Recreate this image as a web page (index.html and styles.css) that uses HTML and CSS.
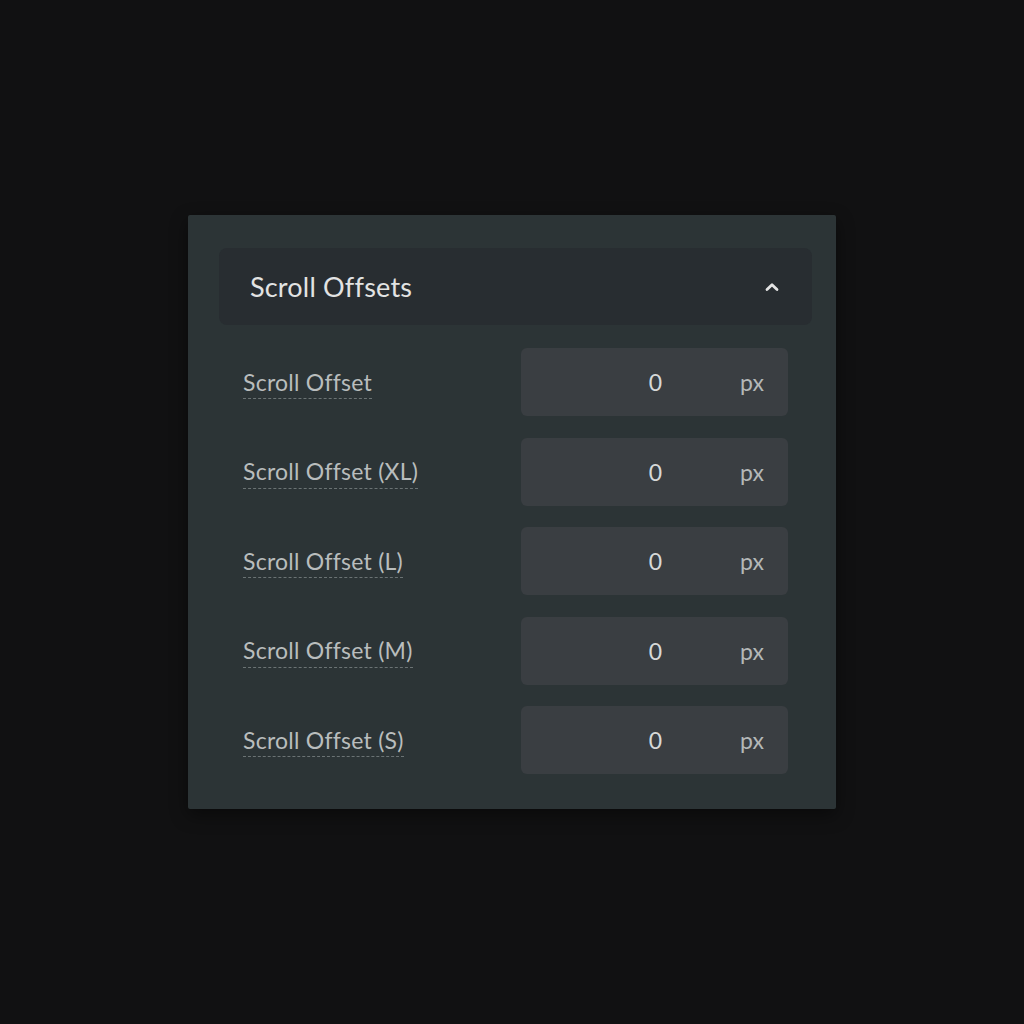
FILE: index.html
```html
<!DOCTYPE html>
<html>
<head>
<meta charset="utf-8">
<link rel="stylesheet" href="styles.css">
</head>
<body>
<div class="stage">
  <section class="panel">
    <header class="panel-head">
      <span class="panel-title">Scroll Offsets</span>
      <svg class="chev" width="16" height="10" viewBox="0 0 16 10"><path d="M3 7.5 L8 2.8 L13 7.5" fill="none" stroke="#e4e4e4" stroke-width="2.8" stroke-linecap="round" stroke-linejoin="round"/></svg>
    </header>
    <div class="rows">
      <div class="row"><span class="label">Scroll Offset</span><div class="field"><span class="num">0</span><span class="unit">px</span></div></div>
      <div class="row"><span class="label">Scroll Offset (XL)</span><div class="field"><span class="num">0</span><span class="unit">px</span></div></div>
      <div class="row"><span class="label">Scroll Offset (L)</span><div class="field"><span class="num">0</span><span class="unit">px</span></div></div>
      <div class="row"><span class="label">Scroll Offset (M)</span><div class="field"><span class="num">0</span><span class="unit">px</span></div></div>
      <div class="row"><span class="label">Scroll Offset (S)</span><div class="field"><span class="num">0</span><span class="unit">px</span></div></div>
    </div>
  </section>
</div>
</body>
</html>
```
FILE: styles.css
```css
html, body {
  margin: 0;
  padding: 0;
  background: #111112;
}
body {
  font-family: "Lato", "Noto Sans", sans-serif;
  width: 1024px;
  height: 1024px;
}
.stage {
  padding-top: 215px;
  padding-left: 188px;
}
.panel {
  width: 648px;
  box-sizing: border-box;
  background: #2c3436;
  border-radius: 2px;
  padding: 33px 24px 35px 31px;
  box-shadow: 0 6px 18px rgba(0,0,0,0.45);
}
.panel-head {
  height: 77px;
  background: #282d31;
  border-radius: 8px;
  display: flex;
  align-items: center;
  justify-content: space-between;
  padding: 0 32px 0 31px;
}
.panel-title {
  color: #e2e3e3;
  font-size: 27px;
  letter-spacing: 0.2px;
}
.chev {
  display: block;
}
.rows {
  display: flex;
  flex-direction: column;
  gap: 21.5px;
  padding: 23px 24px 0 24px;
}
.row {
  display: flex;
  align-items: center;
  justify-content: space-between;
  height: 68px;
}
.label {
  color: #b9bdbd;
  font-size: 23px;
  letter-spacing: 0.25px;
  padding-bottom: 3px;
  margin-top: 4px;
  border-bottom: 1px dashed #6b7374;
  line-height: 1.15;
}
.field {
  width: 267px;
  height: 68px;
  background: #3a3e42;
  border-radius: 6px;
  display: flex;
  align-items: center;
  box-sizing: border-box;
  padding-right: 24px;
}
.num {
  flex: 1;
  text-align: right;
  color: #d6d8d8;
  font-size: 23px;
  padding-right: 78px;
}
.unit {
  color: #b4b8b8;
  font-size: 23px;
}
```
